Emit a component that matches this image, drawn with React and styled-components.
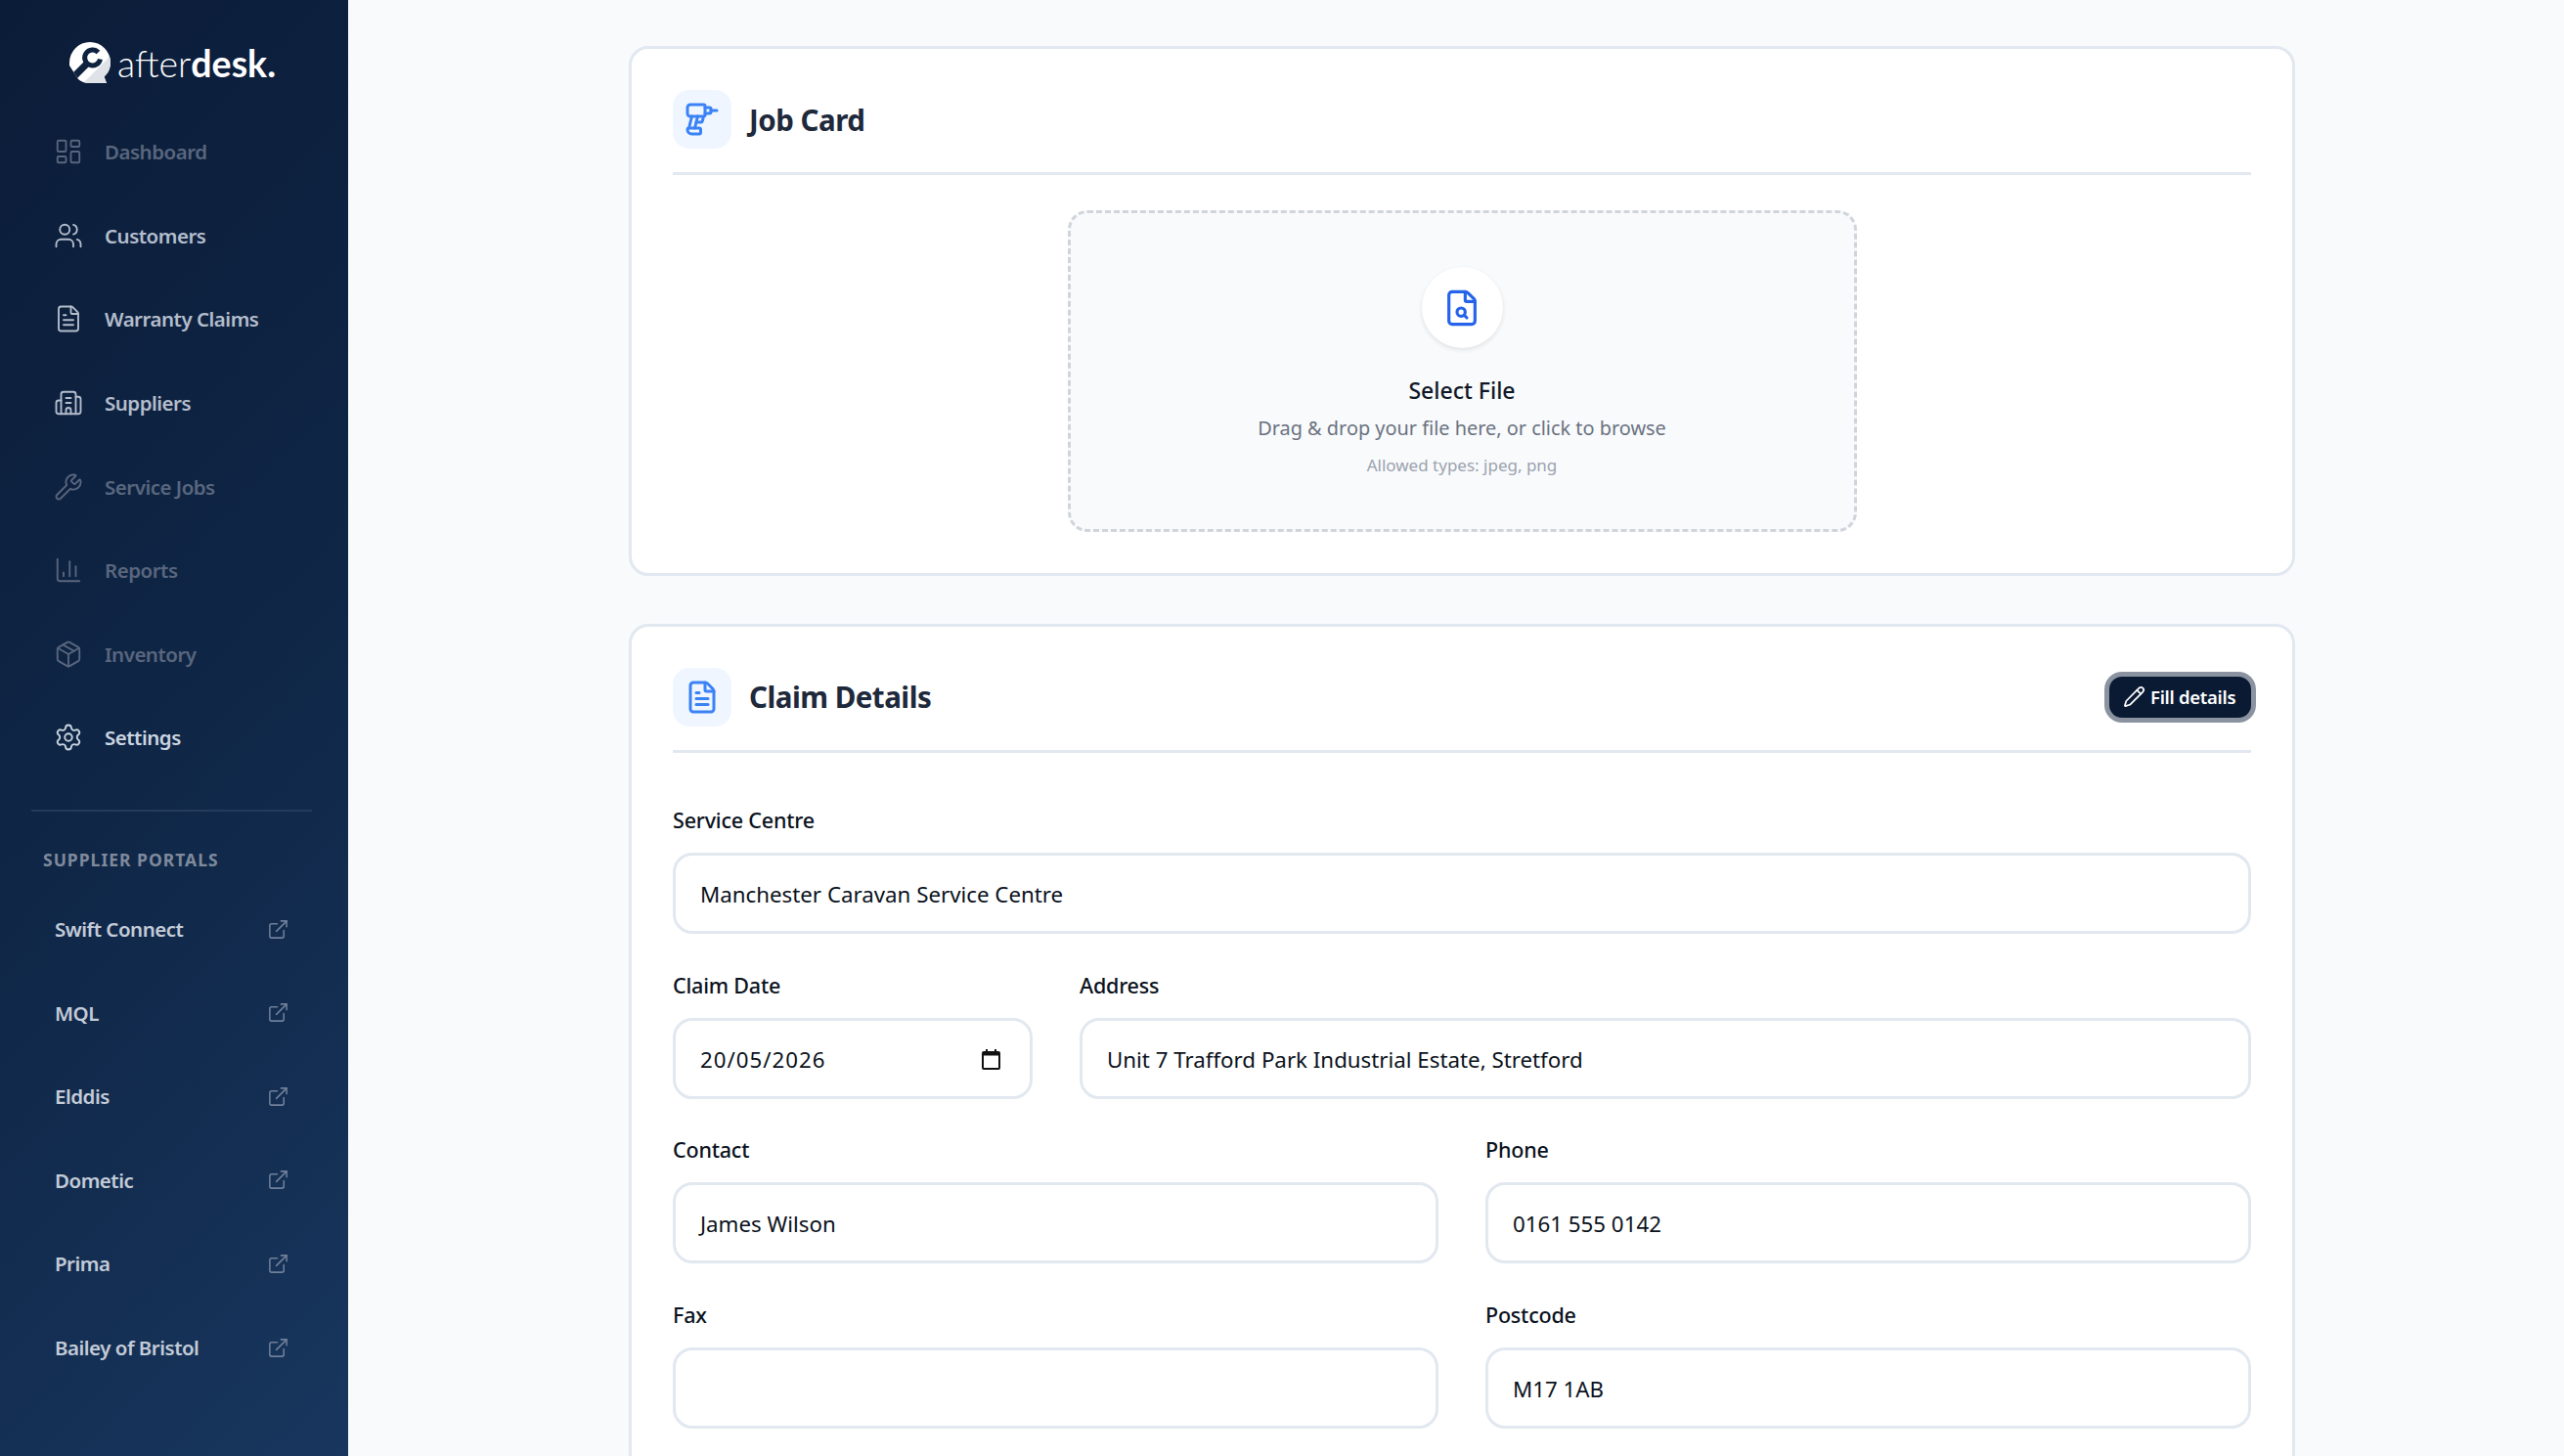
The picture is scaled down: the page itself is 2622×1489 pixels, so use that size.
import styled, { createGlobalStyle } from "styled-components";
import {
  LayoutDashboard,
  Users,
  FileText,
  Building2,
  Wrench,
  ChartColumn,
  Package,
  Settings,
  ExternalLink,
  Drill,
  FileSearch,
  Pencil,
} from "lucide-react";

const GlobalStyle = createGlobalStyle`
  html, body {
    margin: 0;
    padding: 0;
    height: 100%;
    overflow: hidden;
  }
  body {
    font-family: "Noto Sans", "Open Sans", sans-serif;
    background: #f8fafc;
  }
  * {
    box-sizing: border-box;
  }
`;

const Layout = styled.div`
  display: flex;
  height: 100vh;
  overflow: hidden;
`;

const Sidebar = styled.aside`
  width: 356px;
  flex-shrink: 0;
  height: 100%;
  background: linear-gradient(135deg, #0b1c38 0%, #0f2646 50%, #18365e 100%);
  display: flex;
  flex-direction: column;
`;

const LogoRow = styled.div`
  display: flex;
  align-items: center;
  gap: 5px;
  height: 70px;
  margin-top: 30px;
  padding-left: 71px;
`;

const LogoText = styled.span`
  font-family: "Lato", sans-serif;
  font-size: 37.5px;
  font-weight: 300;
  color: #ffffff;
  line-height: 1;

  b {
    font-weight: 700;
  }
`;

const NavList = styled.nav`
  display: flex;
  flex-direction: column;
  margin-top: 12.5px;
`;

const NavItem = styled.a`
  display: flex;
  align-items: center;
  gap: 22px;
  height: 85.6px;
  padding-left: 55px;
  font-size: 20.5px;
  font-weight: 600;
  letter-spacing: -0.5px;
  color: ${(p) => (p.$dim ? "#59667e" : p.$bright ? "#cbd5e1" : "#b4bdcc")};

  svg {
    flex-shrink: 0;
  }
`;

const Divider = styled.div`
  height: 2px;
  margin: 31px 37px 0 32px;
  background: #253b5c;
`;

const SectionTitle = styled.div`
  margin: 38.5px 0 0 44px;
  font-size: 17.5px;
  font-weight: 700;
  letter-spacing: 1px;
  color: #7f8a9c;
  line-height: 20px;
`;

const PortalList = styled.div`
  display: flex;
  flex-direction: column;
  margin-top: 18.5px;
`;

const PortalItem = styled.a`
  display: flex;
  align-items: center;
  justify-content: space-between;
  height: 85.6px;
  padding: 0 60px 0 56px;
  font-size: 20.5px;
  font-weight: 600;
  letter-spacing: -0.5px;
  color: #c3cbd8;

  svg {
    color: #71809a;
  }
`;

const Main = styled.main`
  flex: 1;
  min-width: 0;
  height: 100%;
  overflow: hidden;
  padding: 47px 275px 0 287px;
  display: flex;
  flex-direction: column;
  gap: 48.5px;
`;

const Card = styled.section`
  flex-shrink: 0;
  background: #ffffff;
  border: 3px solid #e2e8f0;
  border-radius: 20px;
  padding: 42px;
`;

const CardHeader = styled.header`
  display: flex;
  align-items: center;
  gap: 18px;
  padding-bottom: 24px;
  border-bottom: 3px solid #e2e8f0;
`;

const IconBox = styled.div`
  width: 60px;
  height: 60px;
  border-radius: 17px;
  background: #eff6ff;
  color: #3b82f6;
  display: flex;
  align-items: center;
  justify-content: center;
`;

const CardTitle = styled.h2`
  flex: 1;
  margin: 0;
  font-size: 29.5px;
  font-weight: 700;
  letter-spacing: -0.5px;
  color: #1e293b;
`;

const FillButton = styled.button`
  display: flex;
  align-items: center;
  gap: 5px;
  width: 145px;
  height: 42px;
  padding: 0 0 0 14px;
  border: none;
  border-radius: 13px;
  background: #0a1a33;
  box-shadow: 0 0 0 5px #8b93a1;
  color: #ffffff;
  font-family: inherit;
  font-size: 18.5px;
  font-weight: 600;
  letter-spacing: -0.3px;
`;

const DropZone = styled.div`
  width: 807px;
  height: 329px;
  margin: 36px auto 0;
  background: #f8fafc;
  border: 3px dashed #d1d5db;
  border-radius: 20px;
  display: flex;
  flex-direction: column;
  align-items: center;
  padding-top: 55px;
`;

const UploadCircle = styled.div`
  width: 83px;
  height: 83px;
  border-radius: 50%;
  background: #ffffff;
  box-shadow: 0 2px 5px rgba(0, 0, 0, 0.1);
  color: #2563eb;
  display: flex;
  align-items: center;
  justify-content: center;
`;

const DropTitle = styled.div`
  margin-top: 27px;
  font-size: 23px;
  font-weight: 500;
  color: #111827;
  line-height: 32px;
`;

const DropHint = styled.div`
  margin-top: 7px;
  font-size: 19.9px;
  color: #6b7280;
  line-height: 32px;
`;

const DropTypes = styled.div`
  margin-top: 8px;
  font-size: 17px;
  color: #9ca3af;
  line-height: 28px;
`;

const Form = styled.div`
  display: flex;
  flex-direction: column;
  gap: 36.7px;
  margin-top: 53.5px;
`;

const Row = styled.div`
  display: grid;
  grid-template-columns: ${(p) => p.$cols || "1fr"};
  gap: 48px;
`;

const Field = styled.div`
  display: flex;
  flex-direction: column;
  gap: 17px;
`;

const Label = styled.label`
  font-size: 21.5px;
  font-weight: 500;
  letter-spacing: -0.2px;
  color: #0b1220;
  line-height: 32px;
`;

const InputBox = styled.div`
  height: 83px;
  display: flex;
  align-items: center;
  justify-content: space-between;
  padding: 2px 30px 0 25px;
  border: 3px solid #e2e8f0;
  border-radius: 20px;
  background: #ffffff;
  font-size: 22.3px;
  color: #0b1220;
`;

const DateValue = styled.span`
  letter-spacing: 1px;
`;

const navItems = [
  { label: "Dashboard", icon: LayoutDashboard, dim: true },
  { label: "Customers", icon: Users },
  { label: "Warranty Claims", icon: FileText },
  { label: "Suppliers", icon: Building2 },
  { label: "Service Jobs", icon: Wrench, dim: true },
  { label: "Reports", icon: ChartColumn, dim: true },
  { label: "Inventory", icon: Package, dim: true },
  { label: "Settings", icon: Settings, bright: true },
];

const portals = ["Swift Connect", "MQL", "Elddis", "Dometic", "Prima", "Bailey of Bristol"];

function LogoMark() {
  return (
    <svg width="44" height="44" viewBox="0 0 44 44">
      <defs>
        <clipPath id="bubble">
          <path d="M21 0a21 21 0 0 1 21 21c0 6-2.5 11-6.5 14.5L38 42H20c-4 0-8-1.5-11-4L0 24v-3A21 21 0 0 1 21 0z" />
        </clipPath>
      </defs>
      <g clipPath="url(#bubble)">
        <rect width="44" height="44" fill="#ffffff" />
        <path d="M44 12 12 44h32z" fill="#dfe3e8" />
        <path d="M29.5 10.5a8 8 0 1 0 2 7" fill="none" stroke="#0e2240" strokeWidth="5" />
        <path d="M18 22 3 37" stroke="#0e2240" strokeWidth="7" />
      </g>
    </svg>
  );
}

// chrome's own date picker glyph
function CalendarGlyph() {
  return (
    <svg width="19" height="21" viewBox="0 0 19 21">
      <path d="M4 0h2v2h7V0h2v2h2a2 2 0 0 1 2 2v15a2 2 0 0 1-2 2H2a2 2 0 0 1-2-2V4a2 2 0 0 1 2-2h2z" fill="#111" />
      <rect x="2" y="6.5" width="15" height="12.5" fill="#fff" />
    </svg>
  );
}

export default function App() {
  return (
    <>
      <GlobalStyle />
      <Layout>
        <Sidebar>
          <LogoRow>
            <LogoMark />
            <LogoText>
              after<b>desk.</b>
            </LogoText>
          </LogoRow>
          <NavList>
            {navItems.map((item) => (
              <NavItem key={item.label} $dim={item.dim} $bright={item.bright}>
                <item.icon size={30} strokeWidth={1.5} />
                {item.label}
              </NavItem>
            ))}
          </NavList>
          <Divider />
          <SectionTitle>SUPPLIER PORTALS</SectionTitle>
          <PortalList>
            {portals.map((name) => (
              <PortalItem key={name}>
                {name}
                <ExternalLink size={23} strokeWidth={1.6} />
              </PortalItem>
            ))}
          </PortalList>
        </Sidebar>
        <Main>
          <Card>
            <CardHeader>
              <IconBox>
                <Drill size={36} strokeWidth={2} />
              </IconBox>
              <CardTitle>Job Card</CardTitle>
            </CardHeader>
            <DropZone>
              <UploadCircle>
                <FileSearch size={40} strokeWidth={1.9} />
              </UploadCircle>
              <DropTitle>Select File</DropTitle>
              <DropHint>Drag &amp; drop your file here, or click to browse</DropHint>
              <DropTypes>Allowed types: jpeg, png</DropTypes>
            </DropZone>
          </Card>
          <Card>
            <CardHeader>
              <IconBox>
                <FileText size={36} strokeWidth={2} />
              </IconBox>
              <CardTitle>Claim Details</CardTitle>
              <FillButton>
                <Pencil size={23} strokeWidth={1.8} />
                Fill details
              </FillButton>
            </CardHeader>
            <Form>
              <Field>
                <Label>Service Centre</Label>
                <InputBox>Manchester Caravan Service Centre</InputBox>
              </Field>
              <Row $cols="368px 1fr">
                <Field>
                  <Label>Claim Date</Label>
                  <InputBox>
                    <DateValue>20/05/2026</DateValue>
                    <CalendarGlyph />
                  </InputBox>
                </Field>
                <Field>
                  <Label>Address</Label>
                  <InputBox>Unit 7 Trafford Park Industrial Estate, Stretford</InputBox>
                </Field>
              </Row>
              <Row $cols="1fr 1fr">
                <Field>
                  <Label>Contact</Label>
                  <InputBox>James Wilson</InputBox>
                </Field>
                <Field>
                  <Label>Phone</Label>
                  <InputBox>0161 555 0142</InputBox>
                </Field>
              </Row>
              <Row $cols="1fr 1fr">
                <Field>
                  <Label>Fax</Label>
                  <InputBox />
                </Field>
                <Field>
                  <Label>Postcode</Label>
                  <InputBox>M17 1AB</InputBox>
                </Field>
              </Row>
            </Form>
          </Card>
        </Main>
      </Layout>
    </>
  );
}
